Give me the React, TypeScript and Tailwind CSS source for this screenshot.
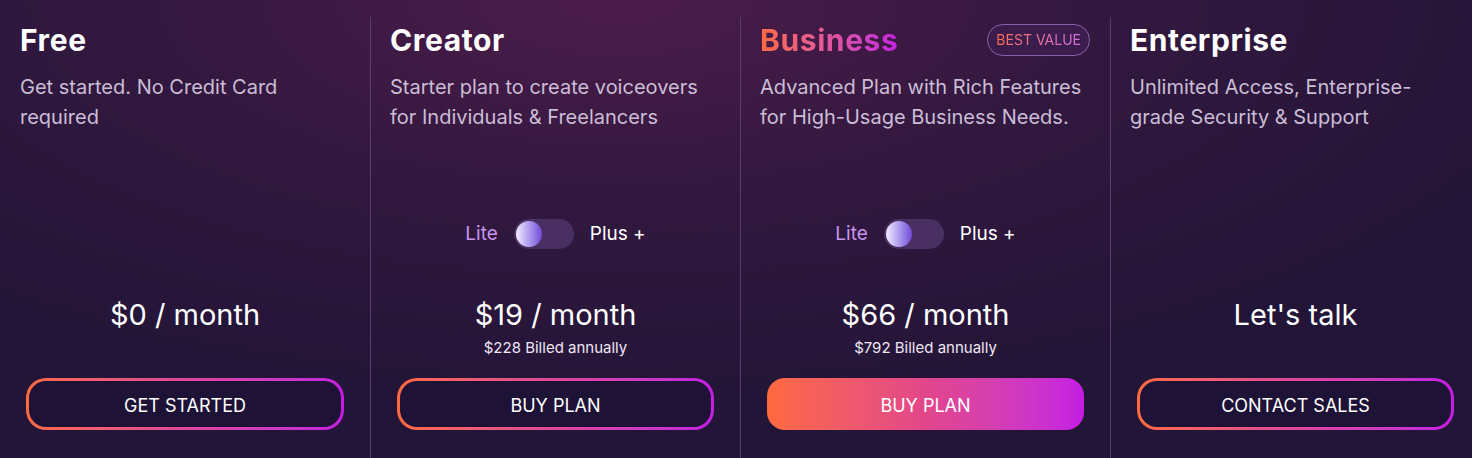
const plans = [
  {
    id: "free",
    name: "Free",
    description: "Get started. No Credit Card required",
    toggle: false,
    price: "$0 / month",
    billed: "",
    cta: "GET STARTED",
    filled: false,
  },
  {
    id: "creator",
    name: "Creator",
    description: "Starter plan to create voiceovers for Individuals & Freelancers",
    toggle: true,
    price: "$19 / month",
    billed: "$228 Billed annually",
    cta: "BUY PLAN",
    filled: false,
  },
  {
    id: "business",
    name: "Business",
    description: "Advanced Plan with Rich Features for High-Usage Business Needs.",
    toggle: true,
    price: "$66 / month",
    billed: "$792 Billed annually",
    cta: "BUY PLAN",
    filled: true,
    badge: "BEST VALUE",
  },
  {
    id: "enterprise",
    name: "Enterprise",
    description: "Unlimited Access, Enterprise-grade Security & Support",
    toggle: false,
    price: "Let's talk",
    billed: "",
    cta: "CONTACT SALES",
    filled: false,
  },
];

function Toggle() {
  return (
    <div className="flex items-center justify-center gap-[16px] text-[19px]">
      <span className="text-[#c795ee]">Lite</span>
      <div className="flex h-[30px] w-[60px] items-center rounded-full bg-[#4a3062] px-[2px]">
        <div className="h-[26px] w-[26px] rounded-full bg-gradient-to-r from-[#f3ecff] to-[#7447d6]" />
      </div>
      <span className="text-white">Plus +</span>
    </div>
  );
}

export default function App() {
  return (
    <div
      className="h-[458px] w-[1472px] overflow-hidden bg-[radial-gradient(ellipse_70%_90%_at_42%_0%,#4c1c4b_0%,#33183f_45%,#221537_100%)]"
      style={{ fontFamily: "Inter, 'Noto Sans', sans-serif" }}
    >
      <div className="mt-[17px] grid w-[1480px] grid-cols-[370px_370px_370px_370px]">
        {plans.map((plan, i) => (
          <div
            key={plan.id}
            className={`h-[441px] ${i > 0 ? "border-l border-[#5b3d6c]" : ""}`}
          >
            <div className={`h-[182px] pt-[5px] ${i > 0 ? "pl-[19px]" : "pl-[20px]"} pr-[20px]`}>
              <div className="flex items-center justify-between">
                {plan.id === "business" ? (
                  <h3 className="bg-gradient-to-r from-[#ff6a3d] to-[#c51fe0] bg-clip-text text-[30px] leading-[36px] font-bold tracking-[0.6px] text-transparent">
                    {plan.name}
                  </h3>
                ) : (
                  <h3 className="text-[30px] leading-[36px] font-bold tracking-[0.6px] text-white">
                    {plan.name}
                  </h3>
                )}
                {plan.badge && (
                  <span className="rounded-full border border-[#8b5fa8] bg-[#3a1d4c] px-[8px] py-[5px] text-[14px] leading-[20px]">
                    <span className="bg-gradient-to-r from-[#ff6a4a] to-[#d36ee0] bg-clip-text text-transparent">
                      {plan.badge}
                    </span>
                  </span>
                )}
              </div>
              <p className="mt-[14px] w-[330px] text-[20px] leading-[30px] text-[#cbbdd6]">
                {plan.description}
              </p>
            </div>

            <div className="flex h-[70px] items-center justify-center">
              {plan.toggle && <Toggle />}
            </div>

            <div className="mt-[28px] h-[81px] text-center text-white">
              <div className="text-[29px] leading-[36px]">{plan.price}</div>
              {plan.billed && (
                <div className="mt-[5px] text-[15px] leading-[20px] text-[#efe6f5]">
                  {plan.billed}
                </div>
              )}
            </div>

            <div className="mx-[26px]">
              {plan.filled ? (
                <button className="flex h-[52px] w-full items-center justify-center rounded-[18px] bg-gradient-to-r from-[#ff6a3d] via-[#e2468a] to-[#c51ce3] pt-[2px] text-[18px] text-white">
                  {plan.cta}
                </button>
              ) : (
                <div className="rounded-[20px] bg-gradient-to-r from-[#ff6a3d] via-[#e0469a] to-[#c51ce3] p-[3px]">
                  <button className="flex h-[46px] w-full items-center justify-center rounded-[17px] bg-[#1e1236] pt-[2px] text-[18px] text-white">
                    {plan.cta}
                  </button>
                </div>
              )}
            </div>
          </div>
        ))}
      </div>
    </div>
  );
}
